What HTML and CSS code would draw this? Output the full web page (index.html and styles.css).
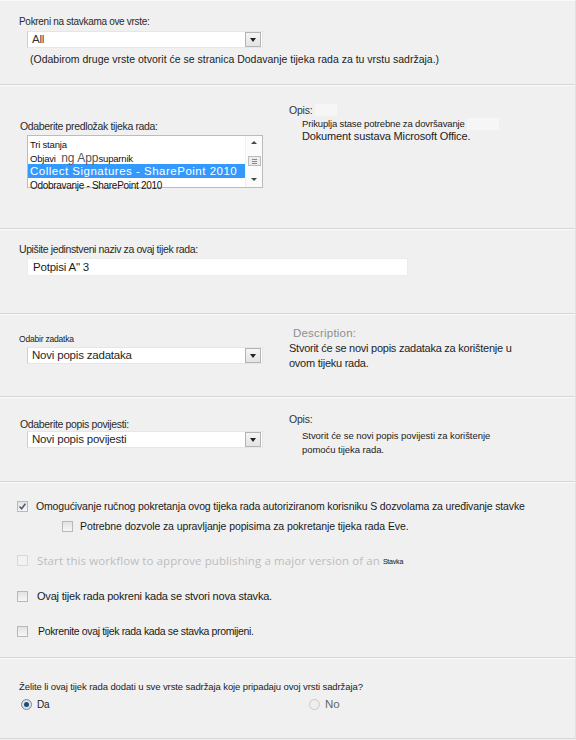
FILE: index.html
```html
<!DOCTYPE html>
<html lang="hr">
<head>
<meta charset="utf-8">
<title>Dodavanje tijeka rada</title>
<link rel="stylesheet" href="styles.css">
</head>
<body>
<div class="page">

  <section class="sec s1">
    <div class="lbl">Pokreni na stavkama ove vrste:</div>
    <div class="select sel-all"><span class="val">All</span><span class="arrow"></span></div>
    <div class="help">(Odabirom druge vrste otvorit će se stranica Dodavanje tijeka rada za tu vrstu sadržaja.)</div>
  </section>

  <section class="sec s2 two">
    <div class="col-left">
      <div class="lbl lbl-tpl">Odaberite predložak tijeka rada:</div>
      <div class="listbox">
        <div class="items">
          <div class="it it1">Tri stanja</div>
          <div class="it it2">Objavi <span class="app">ng App</span>suparnik</div>
          <div class="it it3">Collect Signatures - SharePoint 2010</div>
          <div class="it it4">Odobravanje - SharePoint 2010</div>
        </div>
        <div class="sbar">
          <span class="sb-up"></span>
          <span class="sb-thumb"><i></i><i></i><i></i></span>
          <span class="sb-down"></span>
        </div>
      </div>
    </div>
    <div class="col-right desc2">
      <div class="opis">Opis:<span class="ghost g1"></span></div>
      <div class="d-small">Prikuplja stase potrebne za dovršavanje<span class="ghost g2"></span></div>
      <div class="d-big">Dokument sustava Microsoft Office.</div>
    </div>
  </section>

  <section class="sec s3">
    <div class="lbl">Upišite jedinstveni naziv za ovaj tijek rada:</div>
    <div class="textbox">Potpisi A" 3</div>
  </section>

  <section class="sec s4 two">
    <div class="col-left">
      <div class="lbl-tiny">Odabir zadatka</div>
      <div class="select sel-big"><span class="val">Novi popis zadataka</span><span class="arrow"></span></div>
    </div>
    <div class="col-right desc4">
      <div class="descr-title">Description:</div>
      <div class="descr-text">Stvorit će se novi popis zadataka za korištenje u</div>
      <div class="descr-text">ovom tijeku rada.</div>
    </div>
  </section>

  <section class="sec s5 two">
    <div class="col-left">
      <div class="lbl lbl-hist">Odaberite popis povijesti:</div>
      <div class="select sel-big"><span class="val">Novi popis povijesti</span><span class="arrow"></span></div>
    </div>
    <div class="col-right desc5">
      <div class="opis">Opis:</div>
      <div class="d-small2">Stvorit će se novi popis povijesti za korištenje<br>pomoću tijeka rada.</div>
    </div>
  </section>

  <section class="sec s6">
    <div class="row r1">
      <span class="cb checked"><svg viewBox="0 0 11 11" width="11" height="11"><path d="M2.5 5.6 L4.6 7.8 L8.4 2.8" fill="none" stroke="#4a5a6e" stroke-width="1.5"/></svg></span>
      <span class="t t1">Omogućivanje ručnog pokretanja ovog tijeka rada autoriziranom korisniku S dozvolama za uređivanje stavke</span>
    </div>
    <div class="row r2">
      <span class="cb"></span>
      <span class="t t2">Potrebne dozvole za upravljanje popisima za pokretanje tijeka rada Eve.</span>
    </div>
    <div class="row r3">
      <span class="cb disabled"></span>
      <span class="t t3">Start this workflow to approve publishing a major version of an</span><span class="stavka">Stavka</span>
    </div>
    <div class="row r4">
      <span class="cb"></span>
      <span class="t t4">Ovaj tijek rada pokreni kada se stvori nova stavka.</span>
    </div>
    <div class="row r5">
      <span class="cb"></span>
      <span class="t t5">Pokrenite ovaj tijek rada kada se stavka promijeni.</span>
    </div>
  </section>

  <section class="sec s7">
    <div class="question">Želite li ovaj tijek rada dodati u sve vrste sadržaja koje pripadaju ovoj vrsti sadržaja?</div>
    <div class="radios">
      <label class="radio r-da"><span class="rb on"></span><span>Da</span></label>
      <label class="radio r-no"><span class="rb off"></span><span>No</span></label>
    </div>
  </section>

</div>
</body>
</html>
```

FILE: styles.css
```css
* { box-sizing: border-box; }

html, body {
  margin: 0;
  padding: 0;
  background: #f0f0f0;
}

body {
  font-family: "Liberation Sans", Arial, sans-serif;
  font-size: 10.5px;
  color: #222;
  width: 576px;
  height: 740px;
  overflow: hidden;
}

.page {
  width: 576px;
  border-right: 1px solid #e2e2e2;
}

.sec {
  border-bottom: 1px solid #d6d6d6;
  box-shadow: inset 0 1px 0 #fafafa;
  padding-left: 19px;
}

.two {
  display: flex;
}

.col-left {
  flex: none;
  width: 270px;
}

.col-right {
  flex: 1;
  min-width: 0;
}

.lbl {
  font-size: 10px;
  line-height: 12px;
  letter-spacing: -0.3px;
  color: #2a2a2a;
}

/* ---------- select ---------- */
.select {
  display: flex;
  align-items: center;
  justify-content: space-between;
  width: 236px;
  height: 17px;
  margin-left: 8px;
  background: #fff;
  border: 1px solid #e6e6e6;
  border-left-color: #cfcfcf;
  padding-left: 4px;
  padding-right: 1px;
}

.select .val {
  font-size: 11.5px;
  line-height: 15px;
  color: #333;
  letter-spacing: -0.2px;
}

.sel-big .val {
  font-size: 11.5px;
  color: #1f1f1f;
}

.arrow {
  position: relative;
  width: 16px;
  height: 15px;
  border: 1px solid #b4b4b4;
  background: linear-gradient(#f6f6f6, #e3e3e3);
}

.arrow::after {
  content: "";
  position: absolute;
  left: 4px;
  top: 5px;
  border-left: 3px solid transparent;
  border-right: 3px solid transparent;
  border-top: 4px solid #222;
}

/* ---------- section 1 ---------- */
.s1 {
  height: 85px;
  padding-top: 16px;
}

.s1 .select { margin-top: 3px; }

.help {
  margin-top: 5px;
  margin-left: 11px;
  font-size: 10.5px;
  line-height: 12px;
  color: #222;
}

/* ---------- section 2 ---------- */
.s2 { height: 144px; }

.lbl-tpl {
  margin-top: 35px;
  margin-left: 1px;
  font-size: 10.5px;
  letter-spacing: -0.35px;
}

.listbox {
  display: flex;
  width: 236px;
  height: 53px;
  margin-top: 3px;
  margin-left: 8px;
  background: #fff;
  border: 1px solid #bcbcbc;
}

.items {
  flex: 1;
  padding-top: 3px;
  min-width: 0;
}

.it {
  height: 12.5px;
  line-height: 12.5px;
  font-size: 9.5px;
  letter-spacing: -0.2px;
  padding-left: 2px;
  white-space: nowrap;
  color: #111;
}

.app {
  font-size: 12px;
  color: #555;
  margin-left: 3px;
  letter-spacing: 0;
}

.it3 {
  height: 14px;
  line-height: 14px;
  margin-top: 0;
  background: #3399ff;
  color: #fff;
  font-size: 11.5px;
  letter-spacing: 0.5px;
  padding-left: 2px;
}

.it4 {
  margin-top: 1px;
  height: 13px;
  line-height: 13px;
  font-size: 10px;
  letter-spacing: -0.3px;
}

.sbar {
  width: 17px;
  display: flex;
  flex-direction: column;
  align-items: center;
  justify-content: space-between;
  background: #fbfbfb;
  border-left: 1px solid #f0f0f0;
  padding: 5px 0 6px;
}

.sb-up, .sb-down {
  width: 0;
  height: 0;
  border-left: 3px solid transparent;
  border-right: 3px solid transparent;
}

.sb-up { border-bottom: 3px solid #444; }
.sb-down { border-top: 3px solid #444; }

.sb-thumb {
  width: 13px;
  height: 10px;
  border: 1px solid #bdbdbd;
  background: #ececec;
  display: flex;
  flex-direction: column;
  align-items: center;
  justify-content: center;
  gap: 1px;
}

.sb-thumb i {
  display: block;
  width: 5px;
  height: 1px;
  background: #888;
}

.desc2 { padding-top: 19px; }

.opis {
  font-size: 10.5px;
  line-height: 12px;
  color: #333;
  letter-spacing: -0.2px;
  display: flex;
  align-items: center;
}

.ghost {
  display: inline-block;
  background: #f6f6f6;
}

.g1 { width: 22px; height: 12px; margin-left: 2px; }
.g2 { width: 32px; height: 12px; margin-left: 2px; }

.d-small {
  margin-left: 13px;
  margin-top: 1px;
  font-size: 9.5px;
  line-height: 13px;
  letter-spacing: -0.15px;
  color: #222;
  display: flex;
  align-items: center;
}

.d-big {
  margin-left: 13px;
  font-size: 11px;
  line-height: 13px;
  color: #222;
  letter-spacing: -0.15px;
}

/* ---------- section 3 ---------- */
.s3 {
  height: 85px;
  padding-top: 14px;
}

.s3 .lbl { font-size: 10.5px; letter-spacing: -0.4px; }

.textbox {
  width: 381px;
  height: 18px;
  margin-top: 3px;
  margin-left: 8px;
  background: #fff;
  border: 1px solid #ececec;
  padding-left: 5px;
  font-size: 11.5px;
  line-height: 16px;
  color: #1c1c1c;
  letter-spacing: -0.2px;
}

/* ---------- section 4 ---------- */
.s4 { height: 83px; }

.lbl-tiny {
  margin-top: 20px;
  font-size: 8.5px;
  line-height: 10px;
  letter-spacing: -0.2px;
  color: #222;
}

.s4 .select { margin-top: 3px; }

.desc4 {
  padding-top: 12px;
}

.descr-title {
  margin-left: 4px;
  font-size: 11.5px;
  line-height: 14px;
  color: #8e8e8e;
  letter-spacing: 0.2px;
}

.descr-text {
  margin-left: 0;
  font-size: 11px;
  line-height: 15px;
  color: #1f1f1f;
  letter-spacing: -0.25px;
  white-space: nowrap;
}

.descr-title + .descr-text { margin-top: 1px; }

/* ---------- section 5 ---------- */
.s5 { height: 85px; }

.lbl-hist {
  margin-top: 21px;
  font-size: 10.5px;
  letter-spacing: -0.35px;
  margin-left: 1px;
}

.s5 .select { margin-top: 1px; }

.desc5 { padding-top: 16px; }

.d-small2 {
  margin-left: 13px;
  margin-top: 4px;
  font-size: 9.5px;
  line-height: 14px;
  color: #222;
  letter-spacing: -0.05px;
}

/* ---------- section 6 ---------- */
.s6 {
  height: 176px;
  padding-top: 17px;
  padding-left: 17px;
}

.row {
  display: flex;
  align-items: center;
  height: 14px;
  white-space: nowrap;
}

.r2 { margin-top: 6px; margin-left: 45px; }
.r3 { margin-top: 20px; }
.r4 { margin-top: 22px; }
.r5 { margin-top: 21px; }

.cb {
  flex: none;
  width: 11px;
  height: 11px;
  border: 1px solid #b8b8b8;
  background: linear-gradient(#e2e2e2, #f7f7f7);
  display: inline-flex;
}

.cb svg { margin: -1px; }

.cb.disabled {
  border-color: #d8d8d8;
  background: #f2f2f2;
}

.t { margin-left: 8px; color: #1a1a1a; }

.t1 { font-size: 10.5px; letter-spacing: -0.15px; }
.t2 { margin-left: 7px; font-size: 10.5px; letter-spacing: -0.1px; }
.t3 {
  margin-left: 9px;
  font-family: "Open Sans", "Liberation Sans", sans-serif;
  font-size: 11.5px;
  letter-spacing: 0.1px;
  color: #bdbdbd;
}
.stavka {
  margin-left: 3px;
  margin-top: 3px;
  font-size: 7px;
  color: #111;
  letter-spacing: -0.2px;
}
.t4 { margin-left: 9px; font-size: 11px; letter-spacing: -0.2px; }
.t5 { margin-left: 10px; font-size: 10.5px; letter-spacing: -0.35px; }

/* ---------- section 7 ---------- */
.s7 {
  height: 81px;
  padding-top: 23px;
}

.question {
  font-size: 9.5px;
  line-height: 12px;
  letter-spacing: -0.1px;
  color: #1c1c1c;
}

.radios {
  display: grid;
  grid-template-columns: 288px auto;
  margin-top: 5px;
  padding-left: 2px;
}

.radio {
  display: flex;
  align-items: center;
  gap: 5px;
  height: 12px;
  font-size: 10px;
}

.r-da { color: #1c1c1c; letter-spacing: -0.2px; }
.r-no { color: #666; font-size: 11.5px; }

.rb {
  flex: none;
  width: 11px;
  height: 11px;
  border-radius: 50%;
  display: inline-flex;
  align-items: center;
  justify-content: center;
}

.rb.on {
  border: 1px solid #7a8a9a;
  background: radial-gradient(circle, #e6edf3 0, #cfd7df 100%);
}

.rb.on::after {
  content: "";
  width: 5px;
  height: 5px;
  border-radius: 50%;
  background: #1f4c72;
}

.rb.off {
  border: 1px solid #cacaca;
  background: #eeeeee;
}
```
